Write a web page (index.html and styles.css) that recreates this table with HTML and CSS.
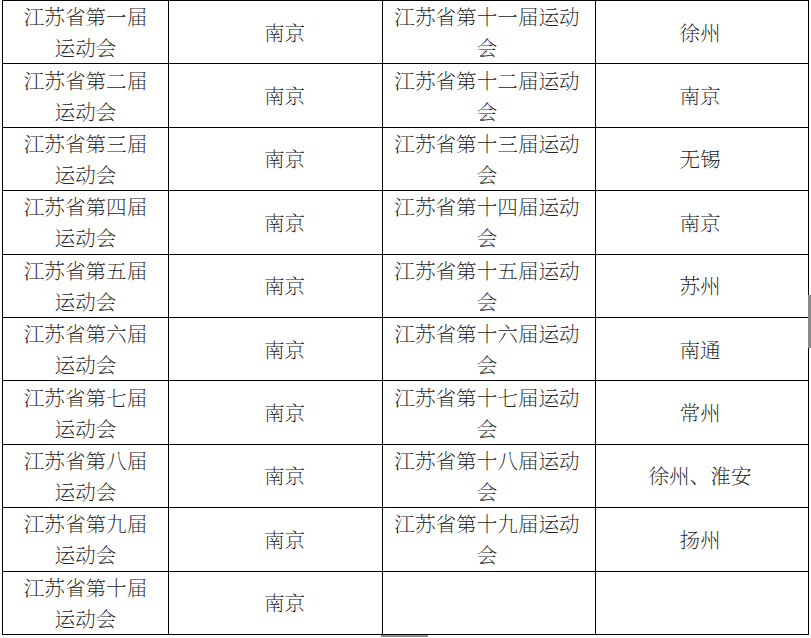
FILE: index.html
```html
<!DOCTYPE html>
<html lang="zh">
<head>
<meta charset="utf-8">
<link rel="stylesheet" href="styles.css">
</head>
<body>
<div class="page">
<table class="games">
<colgroup><col class="c1"><col class="c2"><col class="c3"><col class="c4"></colgroup>
<tr><td>江苏省第一届运动会</td><td>南京</td><td>江苏省第十一届运动会</td><td>徐州</td></tr>
<tr><td>江苏省第二届运动会</td><td>南京</td><td>江苏省第十二届运动会</td><td>南京</td></tr>
<tr><td>江苏省第三届运动会</td><td>南京</td><td>江苏省第十三届运动会</td><td>无锡</td></tr>
<tr><td>江苏省第四届运动会</td><td>南京</td><td>江苏省第十四届运动会</td><td>南京</td></tr>
<tr><td>江苏省第五届运动会</td><td>南京</td><td>江苏省第十五届运动会</td><td>苏州</td></tr>
<tr><td>江苏省第六届运动会</td><td>南京</td><td>江苏省第十六届运动会</td><td>南通</td></tr>
<tr><td>江苏省第七届运动会</td><td>南京</td><td>江苏省第十七届运动会</td><td>常州</td></tr>
<tr><td>江苏省第八届运动会</td><td>南京</td><td>江苏省第十八届运动会</td><td>徐州、淮安</td></tr>
<tr><td>江苏省第九届运动会</td><td>南京</td><td>江苏省第十九届运动会</td><td>扬州</td></tr>
<tr><td>江苏省第十届运动会</td><td>南京</td><td></td><td></td></tr>
</table>
<div class="scroll-v"></div>
<div class="scroll-h"></div>
</div>
</body>
</html>
```
FILE: styles.css
```css
html, body {
  margin: 0;
  padding: 0;
  background: #ffffff;
}
.page {
  position: relative;
  width: 811px;
  height: 638px;
  overflow: hidden;
}
.games {
  border-collapse: collapse;
  table-layout: fixed;
  width: 806px;
  margin-left: 2px;
  margin-top: 0;
  font-family: "Noto Serif CJK SC", "Noto Sans CJK SC", serif;
  font-weight: 200;
  font-size: 20.6px;
  line-height: 31px;
  color: #222222;
}
.c1 { width: 166px; }
.c2 { width: 214px; }
.c3 { width: 213px; }
.c4 { width: 213px; }
.games td {
  border: 1px solid #000000;
  height: 63.4px;
  padding: 0 12px;
  text-align: center;
  vertical-align: middle;
  box-sizing: border-box;
  overflow: hidden;
}
.games td:nth-child(2) {
  padding-left: 30px;
  padding-right: 12px;
}
.games td:nth-child(3) {
  padding-left: 10px;
  padding-right: 14px;
}
.games td:nth-child(4) {
  padding-left: 10px;
  padding-right: 14px;
}
.scroll-v {
  position: absolute;
  left: 808px;
  top: 295px;
  width: 3px;
  height: 53px;
  background: #8a8a8a;
}
.scroll-h {
  position: absolute;
  left: 381px;
  top: 635px;
  width: 47px;
  height: 2px;
  background: #8a8a8a;
}
```
